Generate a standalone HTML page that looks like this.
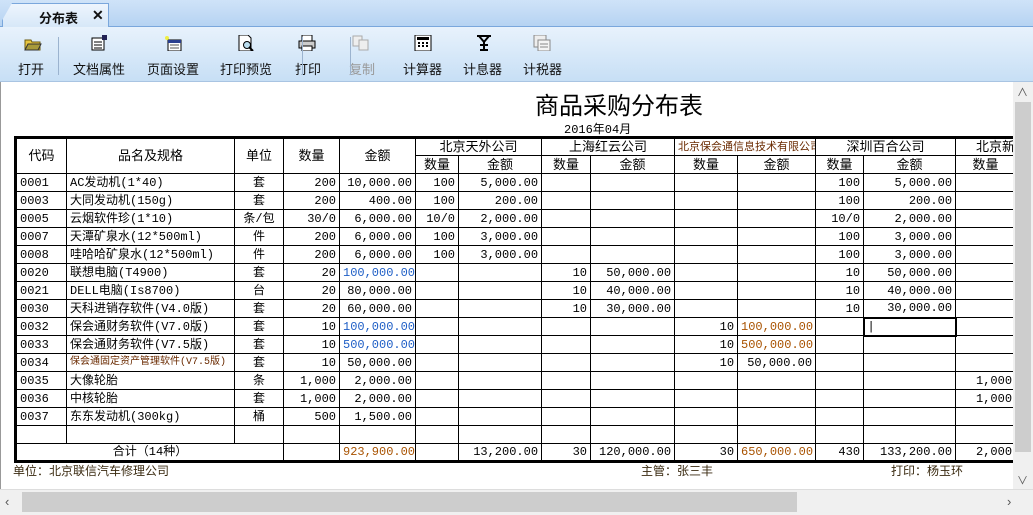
<!DOCTYPE html>
<html><head><meta charset="utf-8"><style>
*{margin:0;padding:0;box-sizing:border-box}
body{width:1033px;height:515px;overflow:hidden;position:relative;background:#fff;font-family:"Liberation Sans","Noto Sans CJK SC",sans-serif}
#tabbar{position:absolute;left:0;top:0;width:1033px;height:27px;background:linear-gradient(#cfe3f8,#b6d3f2);border-bottom:1px solid #7aa7dc}
#tab{position:absolute;left:2px;top:3px;width:107px;height:25px;background:linear-gradient(#eef5fd,#d6e7f8);border:1px solid #7aa7dc;border-bottom:none;clip-path:polygon(10px 0,100% 0,100% 100%,0 100%,0 70%);font-size:13px;font-weight:bold;color:#111}
#tab span{position:absolute;left:36px;top:4px}
#tab b{position:absolute;left:89px;top:3px;font-size:14px}
#tb{position:absolute;left:0;top:27px;width:1033px;height:55px;background:linear-gradient(#e8f2fc,#c7dff5);border-bottom:1px solid #a9c4e2}
.btn{position:absolute;top:32px;font-size:13px;color:#111;text-align:center}
.btn.dis{color:#999}
.ic{position:absolute;top:8px;width:18px;height:16px}
.sep{position:absolute;top:10px;width:1px;height:38px;background:#9bb3cf}
#page{position:absolute;left:0;top:82px;width:1013px;height:407px;background:#fff;overflow:hidden;border-left:1px solid #999}
#vs{position:absolute;left:1013px;top:82px;width:20px;height:407px;background:#f0f0f0}
#hs{position:absolute;left:0;top:489px;width:1033px;height:26px;background:#f0f0f0;border-top:1px solid #ddd}
.m{font-family:"Liberation Mono","Noto Sans CJK SC",monospace}
table{position:absolute;left:13px;top:54px;border-collapse:collapse;table-layout:fixed;font-size:12px;border:3px solid #000;width:1094px}
td{border:1px solid #000;height:18px;padding:0 3px;white-space:nowrap;overflow:hidden;font-family:"Liberation Mono","Noto Sans CJK SC",monospace;line-height:16px}
.c{text-align:center}.r{text-align:right}
.h td{text-align:center;font-family:"Liberation Sans","Noto Sans CJK SC",sans-serif;font-size:13px}
.b{color:#1f5fc6}.o{color:#a85200}
</style></head><body>
<div id="tabbar"><div id="tab"><span>分布表</span><b>✕</b></div></div>
<div id="tb">
<svg class="ic" style="left:24px" viewBox="0 0 18 16"><path d="M1 5h6l1 2h8v8H1z" fill="#e8c640" stroke="#6b5a10"/><path d="M1 15l3-6h13l-3 6z" fill="#a89a3a" stroke="#333"/></svg>
<div class="btn" style="left:18px">打开</div>
<div class="sep" style="left:58px"></div>
<svg class="ic" style="left:90px" viewBox="0 0 18 16"><rect x="2" y="3" width="12" height="12" fill="#fff" stroke="#000"/><path d="M4 7h8M4 10h8M4 13h8" stroke="#000"/><rect x="12" y="0" width="5" height="5" fill="#225"/></svg>
<div class="btn" style="left:73px">文档属性</div>
<svg class="ic" style="left:164px" viewBox="0 0 18 16"><rect x="4" y="5" width="13" height="11" fill="#fff" stroke="#000"/><rect x="4" y="5" width="13" height="3" fill="#2a3f8f"/><path d="M6 10h9M6 13h9" stroke="#555"/><circle cx="3" cy="3" r="2" fill="#ee4"/></svg>
<div class="btn" style="left:147px">页面设置</div>
<svg class="ic" style="left:237px" viewBox="0 0 18 16"><path d="M2 0h9l3 3v13H2z" fill="#fff" stroke="#000"/><circle cx="10" cy="10" r="3.5" fill="#bde" stroke="#000"/><path d="M12 12l4 4" stroke="#000" stroke-width="2"/></svg>
<div class="btn" style="left:220px">打印预览</div>
<svg class="ic" style="left:298px" viewBox="0 0 18 16"><rect x="4" y="0" width="10" height="6" fill="#fff" stroke="#000"/><rect x="1" y="6" width="16" height="7" fill="#ccc" stroke="#000"/><rect x="4" y="11" width="10" height="5" fill="#fff" stroke="#000"/></svg>
<div class="btn" style="left:295px">打印</div>
<div class="sep" style="left:302px"></div>
<svg class="ic" style="left:352px" viewBox="0 0 18 16"><rect x="1" y="1" width="9" height="10" fill="#eee" stroke="#aaa"/><rect x="7" y="5" width="9" height="10" fill="#eee" stroke="#aaa"/></svg>
<div class="btn dis" style="left:349px">复制</div>
<div class="sep" style="left:350px"></div>
<svg class="ic" style="left:414px" viewBox="0 0 18 16"><rect x="1" y="0" width="16" height="16" fill="#fff" stroke="#000"/><rect x="3" y="2" width="12" height="3" fill="#000"/><path d="M4 8h2M8 8h2M12 8h2M4 11h2M8 11h2M12 11h2" stroke="#000" stroke-width="2"/></svg>
<div class="btn" style="left:403px">计算器</div>
<svg class="ic" style="left:475px" viewBox="0 0 18 16"><path d="M2 1h14M4 1l5 6 5-6M9 7v8M5 15h8M5 10h8" stroke="#000" stroke-width="2" fill="none"/></svg>
<div class="btn" style="left:463px">计息器</div>
<svg class="ic" style="left:533px" viewBox="0 0 18 16"><rect x="1" y="0" width="12" height="12" fill="#eee" stroke="#888"/><rect x="5" y="5" width="12" height="11" fill="#f4f4f4" stroke="#888"/><path d="M7 9h8M7 12h8" stroke="#888"/></svg>
<div class="btn" style="left:523px">计税器</div>
</div>
<div id="page">
<div style="position:absolute;left:534px;top:4px;font-size:24px;color:#000;font-family:'Liberation Sans','Noto Sans CJK SC',sans-serif">商品采购分布表</div>
<div class="m" style="position:absolute;left:563px;top:38px;font-size:12px">2016年04月</div>
<table>
<colgroup><col style="width:51px"><col style="width:168px"><col style="width:49px"><col style="width:56px"><col style="width:76px"><col style="width:43px"><col style="width:83px"><col style="width:49px"><col style="width:84px"><col style="width:63px"><col style="width:78px"><col style="width:48px"><col style="width:92px"><col style="width:60px"><col style="width:94px"></colgroup>
<tr class="h"><td rowspan="2">代码</td><td rowspan="2">品名及规格</td><td rowspan="2">单位</td><td rowspan="2">数量</td><td rowspan="2">金额</td><td colspan="2">北京天外公司</td><td colspan="2">上海红云公司</td><td colspan="2" style="font-size:11px;color:#6a2a00">北京保会通信息技术有限公司</td><td colspan="2">深圳百合公司</td><td colspan="2" style="text-align:left;padding-left:20px">北京新华公司</td></tr>
<tr class="h"><td>数量</td><td>金额</td><td>数量</td><td>金额</td><td>数量</td><td>金额</td><td>数量</td><td>金额</td><td>数量</td><td>金额</td></tr>
<tr><td>0001</td><td>AC发动机(1*40)</td><td class="c">套</td><td class="r">200</td><td class="r">10,000.00</td><td class="r">100</td><td class="r">5,000.00</td><td></td><td></td><td></td><td></td><td class="r">100</td><td class="r">5,000.00</td><td></td><td></td></tr>
<tr><td>0003</td><td>大同发动机(150g)</td><td class="c">套</td><td class="r">200</td><td class="r">400.00</td><td class="r">100</td><td class="r">200.00</td><td></td><td></td><td></td><td></td><td class="r">100</td><td class="r">200.00</td><td></td><td></td></tr>
<tr><td>0005</td><td>云烟软件珍(1*10)</td><td class="c">条/包</td><td class="r">30/0</td><td class="r">6,000.00</td><td class="r">10/0</td><td class="r">2,000.00</td><td></td><td></td><td></td><td></td><td class="r">10/0</td><td class="r">2,000.00</td><td></td><td></td></tr>
<tr><td>0007</td><td>天潭矿泉水(12*500ml)</td><td class="c">件</td><td class="r">200</td><td class="r">6,000.00</td><td class="r">100</td><td class="r">3,000.00</td><td></td><td></td><td></td><td></td><td class="r">100</td><td class="r">3,000.00</td><td></td><td></td></tr>
<tr><td>0008</td><td>哇哈哈矿泉水(12*500ml)</td><td class="c">件</td><td class="r">200</td><td class="r">6,000.00</td><td class="r">100</td><td class="r">3,000.00</td><td></td><td></td><td></td><td></td><td class="r">100</td><td class="r">3,000.00</td><td></td><td></td></tr>
<tr><td>0020</td><td>联想电脑(T4900)</td><td class="c">套</td><td class="r">20</td><td class="r b">100,000.00</td><td></td><td></td><td class="r">10</td><td class="r">50,000.00</td><td></td><td></td><td class="r">10</td><td class="r">50,000.00</td><td></td><td></td></tr>
<tr><td>0021</td><td>DELL电脑(Is8700)</td><td class="c">台</td><td class="r">20</td><td class="r">80,000.00</td><td></td><td></td><td class="r">10</td><td class="r">40,000.00</td><td></td><td></td><td class="r">10</td><td class="r">40,000.00</td><td></td><td></td></tr>
<tr><td>0030</td><td>天科进销存软件(V4.0版)</td><td class="c">套</td><td class="r">20</td><td class="r">60,000.00</td><td></td><td></td><td class="r">10</td><td class="r">30,000.00</td><td></td><td></td><td class="r">10</td><td class="r">30,000.00</td><td></td><td></td></tr>
<tr><td>0032</td><td>保会通财务软件(V7.0版)</td><td class="c">套</td><td class="r">10</td><td class="r b">100,000.00</td><td></td><td></td><td></td><td></td><td class="r">10</td><td class="r o">100,000.00</td><td></td><td style="border:2px solid #000">|</td><td></td><td></td></tr>
<tr><td>0033</td><td>保会通财务软件(V7.5版)</td><td class="c">套</td><td class="r">10</td><td class="r b">500,000.00</td><td></td><td></td><td></td><td></td><td class="r">10</td><td class="r o">500,000.00</td><td></td><td></td><td></td><td></td></tr>
<tr><td>0034</td><td style="font-size:10px;color:#6a2a00">保会通固定资产管理软件(V7.5版)</td><td class="c">套</td><td class="r">10</td><td class="r">50,000.00</td><td></td><td></td><td></td><td></td><td class="r">10</td><td class="r">50,000.00</td><td></td><td></td><td></td><td></td></tr>
<tr><td>0035</td><td>大像轮胎</td><td class="c">条</td><td class="r">1,000</td><td class="r">2,000.00</td><td></td><td></td><td></td><td></td><td></td><td></td><td></td><td></td><td class="r">1,000</td><td></td></tr>
<tr><td>0036</td><td>中核轮胎</td><td class="c">套</td><td class="r">1,000</td><td class="r">2,000.00</td><td></td><td></td><td></td><td></td><td></td><td></td><td></td><td></td><td class="r">1,000</td><td></td></tr>
<tr><td>0037</td><td>东东发动机(300kg)</td><td class="c">桶</td><td class="r">500</td><td class="r">1,500.00</td><td></td><td></td><td></td><td></td><td></td><td></td><td></td><td></td><td></td><td></td></tr>
<tr><td></td><td></td><td></td><td></td><td></td><td></td><td></td><td></td><td></td><td></td><td></td><td></td><td></td><td></td><td></td></tr>
<tr><td colspan="3" class="c">合计（14种）</td><td></td><td class="r o">923,900.00</td><td></td><td class="r">13,200.00</td><td class="r">30</td><td class="r">120,000.00</td><td class="r">30</td><td class="r o">650,000.00</td><td class="r">430</td><td class="r">133,200.00</td><td class="r">2,000</td><td></td></tr>
</table>
<div class="m" style="position:absolute;left:12px;top:380px;font-size:12px;color:#3a2a10">单位：北京联信汽车修理公司</div>
<div class="m" style="position:absolute;left:640px;top:380px;font-size:12px;color:#3a2a10">主管：张三丰</div>
<div class="m" style="position:absolute;left:890px;top:380px;font-size:12px;color:#3a2a10">打印：杨玉环</div>
</div>
<div id="vs"><div style="position:absolute;left:2px;top:20px;width:16px;height:350px;background:#cdcdcd"></div><div style="position:absolute;left:4px;top:2px;font-size:11px;color:#555">∧</div><div style="position:absolute;left:4px;top:390px;font-size:11px;color:#555">∨</div></div>
<div id="hs"><div style="position:absolute;left:22px;top:2px;width:775px;height:20px;background:#cdcdcd"></div><div style="position:absolute;left:5px;top:4px;font-size:13px;color:#555">‹</div><div style="position:absolute;left:1007px;top:4px;font-size:13px;color:#555">›</div></div>
</body></html>
